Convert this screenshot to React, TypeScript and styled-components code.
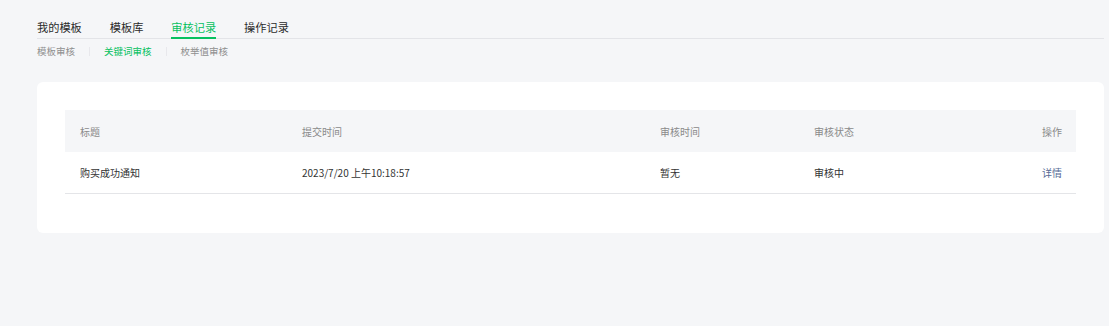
import * as React from "react";
import styled, { createGlobalStyle } from "styled-components";

const GlobalStyle = createGlobalStyle`
  html, body {
    margin: 0;
    padding: 0;
    background: #f5f6f8;
  }
  body {
    font-family: "Noto Sans CJK SC", "Noto Sans", sans-serif;
    color: #333;
  }
`;

const Page = styled.div`
  padding: 18px 5px 0 37px;
  min-height: 326px;
  box-sizing: border-box;
`;

const TabBar = styled.div`
  display: flex;
  gap: 28px;
  border-bottom: 1px solid #e3e4e8;
`;

const Tab = styled.div<{ $active?: boolean }>`
  font-size: 11.2px;
  line-height: 18px;
  padding-bottom: 1px;
  color: ${(p) => (p.$active ? "#07c160" : "#2b2b2b")};
  border-bottom: 2px solid ${(p) => (p.$active ? "#07c160" : "transparent")};
  margin-bottom: -1px;
  cursor: pointer;
`;

const SubBar = styled.div`
  display: flex;
  align-items: center;
  margin-top: 5px;
`;

const SubTab = styled.div<{ $active?: boolean }>`
  font-size: 9.5px;
  line-height: 14px;
  color: ${(p) => (p.$active ? "#07c160" : "#8f8f8f")};
  cursor: pointer;
`;

const Divider = styled.span`
  width: 1px;
  height: 9px;
  background: #e8e8ec;
  margin: 0 14px;
`;

const Card = styled.div`
  margin-top: 24px;
  background: #fff;
  border-radius: 6px;
  padding: 28px 28px 39px;
`;

const Row = styled.div<{ $head?: boolean }>`
  display: grid;
  grid-template-columns: 222px 358px 154px 1fr 120px;
  align-items: center;
  height: ${(p) => (p.$head ? "42px" : "41px")};
  background: ${(p) => (p.$head ? "#f5f6f8" : "#fff")};
  border-bottom: ${(p) => (p.$head ? "none" : "1px solid #e4e5e8")};
  font-size: 10px;
  color: ${(p) => (p.$head ? "#8a8a8a" : "#333")};
`;

const Cell = styled.div<{ $right?: boolean }>`
  padding: 0 14px 0 15px;
  text-align: ${(p) => (p.$right ? "right" : "left")};
  white-space: nowrap;
`;

const Link = styled.span`
  color: #576b95;
  cursor: pointer;
`;

const tabs = ["我的模板", "模板库", "审核记录", "操作记录"];
const subTabs = ["模板审核", "关键词审核", "枚举值审核"];

export default function App() {
  return (
    <>
      <GlobalStyle />
      <Page>
        <TabBar>
          {tabs.map((t) => (
            <Tab key={t} $active={t === "审核记录"}>
              {t}
            </Tab>
          ))}
        </TabBar>
        <SubBar>
          {subTabs.map((t, i) => (
            <React.Fragment key={t}>
              {i > 0 && <Divider />}
              <SubTab $active={t === "关键词审核"}>{t}</SubTab>
            </React.Fragment>
          ))}
        </SubBar>
        <Card>
          <Row $head>
            <Cell>标题</Cell>
            <Cell>提交时间</Cell>
            <Cell>审核时间</Cell>
            <Cell>审核状态</Cell>
            <Cell $right>操作</Cell>
          </Row>
          <Row>
            <Cell>购买成功通知</Cell>
            <Cell>2023/7/20 上午10:18:57</Cell>
            <Cell>暂无</Cell>
            <Cell>审核中</Cell>
            <Cell $right>
              <Link>详情</Link>
            </Cell>
          </Row>
        </Card>
      </Page>
    </>
  );
}
